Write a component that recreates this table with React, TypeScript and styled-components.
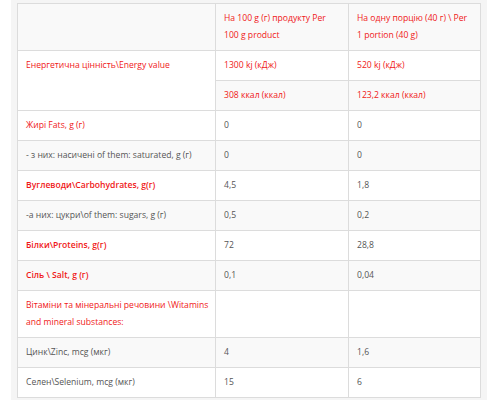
import styled, { createGlobalStyle } from "styled-components";

type Row = {
  label: string;
  per100: string;
  portion: string;
  accent?: boolean;
  strong?: boolean;
};

const GlobalStyle = createGlobalStyle`
  body {
    margin: 0;
    background: #ffffff;
    font-family: "Open Sans", "Liberation Sans", sans-serif;
  }
`;

const Panel = styled.div`
  width: 476px;
  margin-left: 11px;
  padding: 3px 7px 13px 6px;
  box-sizing: border-box;
  background: #f5f5f5;
`;

const Table = styled.table`
  width: 463px;
  table-layout: fixed;
  border-collapse: collapse;
  border: 1px solid #dcdcdc;
  font-size: 8.6px;
  line-height: 17px;

  tr:nth-child(odd) {
    background: #f9f9f9;
  }

  tr:nth-child(even) {
    background: #ffffff;
  }
`;

const Cell = styled.td<{ $accent?: boolean; $strong?: boolean }>`
  padding: 6px 8px;
  border: 1px solid #dcdcdc;
  vertical-align: middle;
  color: ${({ $accent }) => ($accent ? "#f01818" : "#555555")};
  font-weight: ${({ $strong }) => ($strong ? 600 : 400)};
  word-wrap: break-word;
`;

const LabelCell = styled(Cell)`
  padding-right: 3px;
`;

const SpanLabelCell = styled(LabelCell)`
  vertical-align: top;
`;

const rows: Row[] = [
  { label: "Жирі Fats, g (г)", per100: "0", portion: "0", accent: true },
  { label: "- з них: насичені of them: saturated, g (г)", per100: "0", portion: "0" },
  { label: "Вуглеводи\\Carbohydrates, g(г)", per100: "4,5", portion: "1,8", accent: true, strong: true },
  { label: "-а них: цукри\\of them: sugars, g (г)", per100: "0,5", portion: "0,2" },
  { label: "Білки\\Proteins, g(г)", per100: "72", portion: "28,8", accent: true, strong: true },
  { label: "Сіль \\ Salt, g (г)", per100: "0,1", portion: "0,04", accent: true, strong: true },
  {
    label: "Вітаміни та мінеральні речовини \\Witamins and mineral substances:",
    per100: "",
    portion: "",
    accent: true,
  },
  { label: "Цинк\\Zinc, mcg (мкг)", per100: "4", portion: "1,6" },
  { label: "Селен\\Selenium, mcg (мкг)", per100: "15", portion: "6" },
];

export default function App() {
  return (
    <>
      <GlobalStyle />
      <Panel>
        <Table>
          <colgroup>
            <col style={{ width: 198 }} />
            <col style={{ width: 133 }} />
            <col style={{ width: 132 }} />
          </colgroup>
          <tbody>
            <tr>
              <LabelCell />
              <Cell $accent>На 100 g (г) продукту Per 100 g product</Cell>
              <Cell $accent>На одну порцію (40 г) \ Per 1 portion (40 g)</Cell>
            </tr>
            <tr>
              <SpanLabelCell $accent rowSpan={2}>
                Енергетична цінність\Energy value
              </SpanLabelCell>
              <Cell $accent>1300 kj (кДж)</Cell>
              <Cell $accent>520 kj (кДж)</Cell>
            </tr>
            <tr>
              <Cell $accent>308 ккал (ккал)</Cell>
              <Cell $accent>123,2 ккал (ккал)</Cell>
            </tr>
            {rows.map((row) => (
              <tr key={row.label}>
                <LabelCell $accent={row.accent} $strong={row.strong}>
                  {row.label}
                </LabelCell>
                <Cell>{row.per100}</Cell>
                <Cell>{row.portion}</Cell>
              </tr>
            ))}
          </tbody>
        </Table>
      </Panel>
    </>
  );
}
